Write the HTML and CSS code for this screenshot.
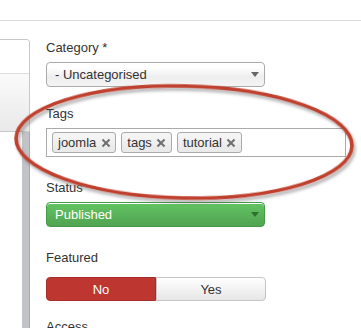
FILE: index.html
```html
<!DOCTYPE html>
<html lang="en">
<head>
    <meta charset="UTF-8">
    <title>Article Options</title>
    <link rel="stylesheet" href="styles.css">
</head>
<body>
    <div class="topbar"></div>

    <div class="main">
        <!-- Left column (cut off) -->
        <aside class="side">
            <div class="side-panel">
                <div class="side-head"></div>
                <div class="side-body"></div>
            </div>
            <div class="side-rail"></div>
        </aside>

        <!-- Options column -->
        <div class="fields">
            <div class="group group-category">
                <label class="field-label">Category *</label>
                <div class="select">
                    <span>- Uncategorised</span>
                    <span class="caret"></span>
                </div>
            </div>

            <div class="group group-tags">
                <label class="field-label">Tags</label>
                <div class="tag-box">
                    <span class="tag">joomla <span class="tag-x"></span></span>
                    <span class="tag">tags <span class="tag-x"></span></span>
                    <span class="tag">tutorial <span class="tag-x"></span></span>
                </div>
            </div>

            <div class="group group-status">
                <label class="field-label">Status</label>
                <div class="select select-green">
                    <span>Published</span>
                    <span class="caret"></span>
                </div>
            </div>

            <div class="group group-featured">
                <label class="field-label">Featured</label>
                <div class="toggle">
                    <button class="toggle-btn active-no">No</button>
                    <button class="toggle-btn">Yes</button>
                </div>
            </div>

            <div class="group group-access">
                <label class="field-label">Access</label>
            </div>
        </div>
    </div>

    <!-- Hand drawn highlight round the tags field -->
    <svg class="marker" width="361" height="328" viewBox="0 0 361 328">
        <defs>
            <filter id="soft" x="-10%" y="-20%" width="120%" height="140%">
                <feDropShadow dx="2" dy="3" stdDeviation="1.6" flood-color="#555" flood-opacity="0.45"/>
            </filter>
        </defs>
        <ellipse cx="184" cy="142" rx="168" ry="56" transform="rotate(1.3 184 142)"
                 fill="none" stroke="#c0412d" stroke-width="3.6" filter="url(#soft)"/>
    </svg>
</body>
</html>
```

FILE: styles.css
```css
/* page */
body {
    margin: 0;
    width: 361px;
    height: 328px;
    overflow: hidden;
    position: relative;
    background: #fff;
    font-family: "Liberation Sans", Arial, sans-serif;
    font-size: 13px;
    line-height: 18px;
    color: #333;
}

.topbar {
    height: 20px;
    border-bottom: 1px solid #dcdcdc;
}

.main {
    display: flex;
    height: 307px;
}

/* left column */
.side {
    width: 30px;
    display: flex;
    flex-direction: column;
}

.side-panel {
    margin-top: 18px;
    border: 1px solid #c8c8c8;
    border-left: none;
    border-top-right-radius: 4px;
    overflow: hidden;
}

.side-head {
    height: 33px;
    background: #fff;
    border-bottom: 1px solid #dedede;
}

.side-body {
    height: 57px;
    background: linear-gradient(#fafafa, #e9e9e9);
}

.side-rail {
    flex: 1;
    margin-left: 22px;
    background: #c1c3c6;
    border-right: 1px solid #a7a9ac;
}

/* options column */
.fields {
    padding: 18px 0 0 16px;
}

.field-label {
    display: block;
    margin-bottom: 5px;
}

.group-tags { margin-top: 18px; }
.group-status { margin-top: 22px; }
.group-featured { margin-top: 22px; }
.group-featured .field-label { margin-bottom: 10px; }
.group-access { margin-top: 17px; }

.select {
    width: 219px;
    height: 25px;
    box-sizing: border-box;
    display: flex;
    align-items: center;
    justify-content: space-between;
    padding: 0 5px 0 8px;
    border: 1px solid #aaa;
    border-radius: 4px;
    background: linear-gradient(#fff 20%, #eee 60%, #f4f4f4);
    box-shadow: 0 1px 0 #fff inset;
}

.caret {
    width: 0;
    height: 0;
    border-left: 4px solid transparent;
    border-right: 4px solid transparent;
    border-top: 5px solid #666;
}

.select-green {
    border-color: #46994a;
    background: linear-gradient(#62c462, #51a351);
    color: #fff;
}

.select-green .caret {
    border-top-color: #2f6f31;
}

/* tags */
.tag-box {
    width: 300px;
    height: 29px;
    box-sizing: border-box;
    display: flex;
    align-items: center;
    gap: 5px;
    padding: 0 5px;
    border: 1px solid #aaa;
    background: #fff;
}

.tag {
    display: flex;
    align-items: center;
    height: 21px;
    box-sizing: border-box;
    padding: 0 6px 0 5px;
    border: 1px solid #aaa;
    border-radius: 3px;
    background: linear-gradient(#f4f4f4 20%, #eaeaea 80%);
    color: #333;
}

.tag-x {
    position: relative;
    width: 7px;
    height: 8px;
    margin-left: 6px;
}

.tag-x::before,
.tag-x::after {
    content: "";
    position: absolute;
    left: 2.5px;
    top: -1px;
    width: 2px;
    height: 10px;
    background: #707070;
    transform: rotate(45deg);
}

.tag-x::after {
    transform: rotate(-45deg);
}

/* yes / no */
.toggle {
    display: flex;
    width: 220px;
}

.toggle-btn {
    flex: 1;
    height: 24px;
    font-family: inherit;
    font-size: 13px;
    color: #333;
    border: 1px solid #c5c5c5;
    background: linear-gradient(#fff, #e6e6e6);
    border-radius: 0 4px 4px 0;
    padding: 0;
}

.toggle-btn.active-no {
    background: #bd362f;
    border-color: #a52f29;
    color: #fff;
    border-radius: 4px 0 0 4px;
}

/* red ring drawn over the form */
.marker {
    position: absolute;
    top: 0;
    left: 0;
    pointer-events: none;
}
```
